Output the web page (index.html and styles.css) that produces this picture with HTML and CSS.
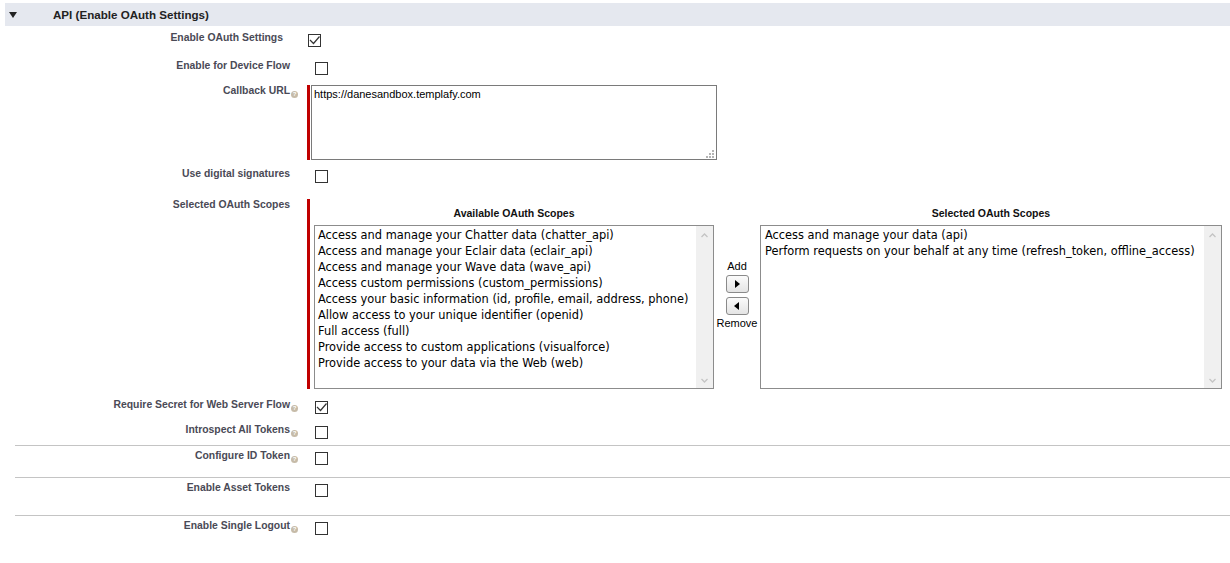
FILE: index.html
```html
<!DOCTYPE html>
<html>
  <head>
    <title>API (Enable OAuth Settings)</title>
    <link rel="stylesheet" href="styles.css">
  </head>
  <body>
    <div class="section">
      <div class="sectionHeader">
        <span class="twisty"></span>
        <h3>API (Enable OAuth Settings)</h3>
      </div>

      <div class="row r1 shifted">
        <div class="labelCol">Enable OAuth Settings</div>
        <div class="dataCol">
          <span class="check"><svg width="11" height="11" viewBox="0 0 11 11"><polyline points="1,5 4.5,8.5 10.5,1.5" fill="none" stroke="#333" stroke-width="1.2"/></svg></span>
        </div>
      </div>

      <div class="row r2">
        <div class="labelCol">Enable for Device Flow</div>
        <div class="dataCol"><span class="check"></span></div>
      </div>

      <div class="row r3">
        <div class="labelCol">Callback URL<span class="help">?</span></div>
        <div class="dataCol required">
          <div class="urlBox">
            <textarea class="urlInput" readonly>https://danesandbox.templafy.com</textarea>
            <svg class="grip" width="8" height="8" viewBox="0 0 8 8">
              <rect x="6" y="0" width="2" height="2"/>
              <rect x="3" y="3" width="2" height="2"/>
              <rect x="6" y="3" width="2" height="2"/>
              <rect x="0" y="6" width="2" height="2"/>
              <rect x="3" y="6" width="2" height="2"/>
              <rect x="6" y="6" width="2" height="2"/>
            </svg>
          </div>
        </div>
      </div>

      <div class="row r4">
        <div class="labelCol">Use digital signatures</div>
        <div class="dataCol"><span class="check"></span></div>
      </div>

      <div class="row r5">
        <div class="labelCol">Selected OAuth Scopes</div>
        <div class="dataCol required scopes">
          <div class="scopeCol available">
            <div class="scopeTitle">Available OAuth Scopes</div>
            <div class="listBox">
              <div class="options">
                <div>Access and manage your Chatter data (chatter_api)</div>
                <div>Access and manage your Eclair data (eclair_api)</div>
                <div>Access and manage your Wave data (wave_api)</div>
                <div>Access custom permissions (custom_permissions)</div>
                <div>Access your basic information (id, profile, email, address, phone)</div>
                <div>Allow access to your unique identifier (openid)</div>
                <div>Full access (full)</div>
                <div>Provide access to custom applications (visualforce)</div>
                <div>Provide access to your data via the Web (web)</div>
              </div>
              <div class="scrollTrack">
                <svg width="7" height="5" viewBox="0 0 7 5"><polyline points="0.5,4 3.5,1 6.5,4" fill="none" stroke="#c4c4c4" stroke-width="1.3"/></svg>
                <svg width="7" height="5" viewBox="0 0 7 5"><polyline points="0.5,1 3.5,4 6.5,1" fill="none" stroke="#c4c4c4" stroke-width="1.3"/></svg>
              </div>
            </div>
          </div>

          <div class="moveCol">
            <span class="moveText">Add</span>
            <button class="moveBtn"><span class="arrowRight"></span></button>
            <button class="moveBtn"><span class="arrowLeft"></span></button>
            <span class="moveText">Remove</span>
          </div>

          <div class="scopeCol selected">
            <div class="scopeTitle">Selected OAuth Scopes</div>
            <div class="listBox">
              <div class="options">
                <div>Access and manage your data (api)</div>
                <div>Perform requests on your behalf at any time (refresh_token, offline_access)</div>
              </div>
              <div class="scrollTrack">
                <svg width="7" height="5" viewBox="0 0 7 5"><polyline points="0.5,4 3.5,1 6.5,4" fill="none" stroke="#c4c4c4" stroke-width="1.3"/></svg>
                <svg width="7" height="5" viewBox="0 0 7 5"><polyline points="0.5,1 3.5,4 6.5,1" fill="none" stroke="#c4c4c4" stroke-width="1.3"/></svg>
              </div>
            </div>
          </div>
        </div>
      </div>

      <div class="row r6">
        <div class="labelCol">Require Secret for Web Server Flow<span class="help">?</span></div>
        <div class="dataCol">
          <span class="check"><svg width="11" height="11" viewBox="0 0 11 11"><polyline points="1,5 4.5,8.5 10.5,1.5" fill="none" stroke="#333" stroke-width="1.2"/></svg></span>
        </div>
      </div>

      <div class="row r7">
        <div class="labelCol">Introspect All Tokens<span class="help">?</span></div>
        <div class="dataCol"><span class="check"></span></div>
      </div>

      <div class="divider"></div>

      <div class="row r8">
        <div class="labelCol">Configure ID Token<span class="help">?</span></div>
        <div class="dataCol"><span class="check"></span></div>
      </div>

      <div class="divider"></div>

      <div class="row r9">
        <div class="labelCol">Enable Asset Tokens</div>
        <div class="dataCol"><span class="check"></span></div>
      </div>

      <div class="divider"></div>

      <div class="row r10">
        <div class="labelCol">Enable Single Logout<span class="help">?</span></div>
        <div class="dataCol"><span class="check"></span></div>
      </div>
    </div>
  </body>
</html>
```

FILE: styles.css
```css
*{
  box-sizing: border-box;
}

body{
  margin: 0;
  font-family: "Liberation Sans", Arial, sans-serif;
  background: #ffffff;
}

/* section header */
.sectionHeader{
  display: flex;
  align-items: center;
  height: 23px;
  margin: 3px 0 0 5px;
  padding-left: 4px;
  background: #e5e8ef;
}

.twisty{
  width: 0;
  height: 0;
  border-left: 4px solid transparent;
  border-right: 4px solid transparent;
  border-top: 6px solid #222;
  margin-top: 1px;
}

.sectionHeader h3{
  margin: 0 0 0 36px;
  font-size: 11.6px;
  font-weight: bold;
  color: #222;
}

/* rows */
.row{
  display: flex;
  align-items: flex-start;
}

.r1{ margin-top: 4px; height: 28px; }
.r2{ height: 25px; }
.r3{ height: 83px; }
.r4{ height: 31px; }
.r5{ height: 200px; }
.r6{ height: 25px; }
.r7{ height: 23px; }
.r8{ height: 31px; padding-top: 2px; }
.r9{ height: 37px; padding-top: 2px; }
.r10{ height: 30px; padding-top: 2px; }

.labelCol{
  flex: none;
  width: 307px;
  padding-top: 1px;
  padding-right: 17px;
  text-align: right;
  font-size: 10.4px;
  font-weight: bold;
  line-height: 14px;
  color: #4a4a56;
  white-space: nowrap;
}

.shifted .labelCol{
  width: 300px;
}

.help{
  display: inline-block;
  width: 7px;
  height: 7px;
  margin-left: 1px;
  margin-right: -8px;
  border-radius: 50%;
  background: #c6bba8;
  color: #ffffff;
  font-size: 6px;
  line-height: 7px;
  text-align: center;
  vertical-align: -1.5px;
}

.dataCol{
  padding-top: 4px;
  padding-left: 8px;
}

.dataCol.required{
  margin-top: 2px;
  padding-top: 0;
  padding-left: 0;
  border-left: 3px solid #c00000;
}

.check{
  display: flex;
  align-items: center;
  justify-content: center;
  width: 13px;
  height: 13px;
  border: 1px solid #333333;
  background: #ffffff;
}

/* callback url */
.urlBox{
  position: relative;
  width: 406px;
  height: 75px;
  margin-left: 1px;
}

.urlInput{
  display: block;
  width: 100%;
  height: 100%;
  margin: 0;
  padding: 1px 2px;
  border: 1px solid #7a7a7a;
  border-radius: 0;
  resize: none;
  outline: none;
  font-family: "Liberation Sans", Arial, sans-serif;
  font-size: 11px;
  line-height: 14px;
  color: #000000;
}

.grip{
  position: absolute;
  right: 3px;
  bottom: 2px;
  fill: #b4b4b4;
}

/* scopes */
.dataCol.scopes{
  display: flex;
  padding-top: 7px;
  padding-left: 4px;
  height: 190px;
}

.scopeCol{
  display: flex;
  flex-direction: column;
}

.available{ width: 400px; }
.selected{ width: 462px; }

.scopeTitle{
  text-align: center;
  font-size: 10.5px;
  font-weight: bold;
  line-height: 14px;
  color: #111;
  margin-bottom: 5px;
}

.listBox{
  display: flex;
  height: 164px;
  border: 1px solid #8c8c8c;
  background: #ffffff;
}

.options{
  flex: 1;
  padding: 1px 3px;
  font-family: "DejaVu Sans", Tahoma, sans-serif;
  font-size: 11.4px;
  line-height: 16px;
  color: #000000;
  white-space: nowrap;
  overflow: hidden;
}

.selected .options{
  padding-left: 4px;
}

.scrollTrack{
  flex: none;
  width: 17px;
  display: flex;
  flex-direction: column;
  align-items: center;
  justify-content: space-between;
  padding: 7px 0 5px;
  background: #f0f0f0;
}

.moveCol{
  flex: none;
  width: 46px;
  display: flex;
  flex-direction: column;
  align-items: center;
  padding-top: 53px;
}

.moveText{
  font-size: 11px;
  line-height: 14px;
  color: #000;
}

.moveBtn{
  flex: none;
  display: flex;
  align-items: center;
  justify-content: center;
  width: 23px;
  height: 18px;
  margin: 2px 0 0;
  padding: 0;
  border: 1px solid #8a8a8a;
  border-radius: 3px;
  background: linear-gradient(#fbfbfb, #e4e4e4);
}

.moveBtn + .moveBtn{
  margin-top: 4px;
  margin-bottom: 1px;
}

.arrowRight{
  border-top: 4px solid transparent;
  border-bottom: 4px solid transparent;
  border-left: 5px solid #000;
  margin-left: 1px;
}

.arrowLeft{
  border-top: 4px solid transparent;
  border-bottom: 4px solid transparent;
  border-right: 5px solid #000;
  margin-right: 1px;
}

.divider{
  height: 1px;
  margin-left: 15px;
  background: #c4c4c4;
}
```
